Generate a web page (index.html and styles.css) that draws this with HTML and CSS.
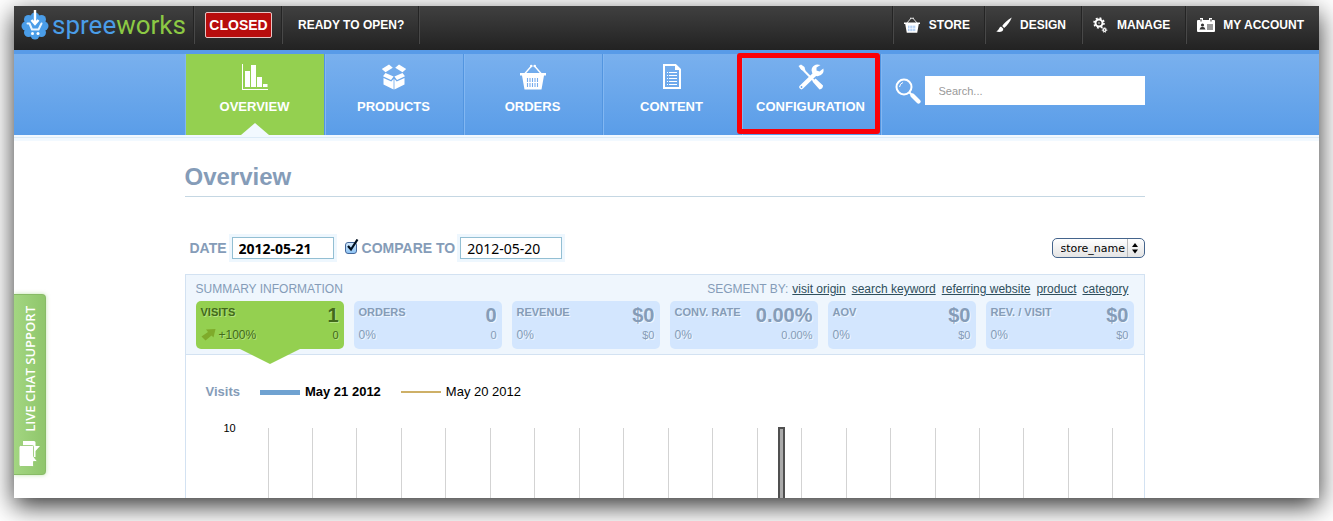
FILE: index.html
```html
<!DOCTYPE html>
<html lang="en">
<head>
<meta charset="utf-8">
<title>Spreeworks - Overview</title>
<link rel="stylesheet" href="styles.css">
</head>
<body>
<div class="frame">
  <header class="topbar">
    <a class="logo" href="#">
      <svg width="28" height="32" viewBox="0 0 28 32" aria-hidden="true">
        <g fill="#4a9de8"><circle cx="14" cy="17" r="11"/><circle cx="14" cy="8" r="4.500"/><circle cx="14" cy="26" r="4.500"/><circle cx="5" cy="17" r="4.500"/><circle cx="23" cy="17" r="4.500"/><circle cx="7.500" cy="10.500" r="4.500"/><circle cx="20.500" cy="10.500" r="4.500"/><circle cx="7.500" cy="23.500" r="4.500"/><circle cx="20.500" cy="23.500" r="4.500"/></g>
        <path d="M14 1V14M10.500 11L14 15L17.500 11" fill="none" stroke="#fff" stroke-width="2.400"/>
        <path d="M6.500 14.500H8.500L11 20.500H17.500L20.500 14.500" fill="none" stroke="#e8f5ff" stroke-width="2" stroke-linejoin="round" stroke-linecap="round"/>
        <circle cx="11.500" cy="24.500" r="1.500" fill="#fff"/><circle cx="17" cy="24.500" r="1.500" fill="#fff"/>
      </svg>
      <span class="wordmark">spree<span class="works">works</span></span>
    </a>
    <div class="status"><span class="closed">CLOSED</span></div>
    <a class="ready" href="#">READY TO OPEN?</a>
    <nav class="account" aria-label="Account">
      <a class="store" href="#">
        <svg width="16" height="16" viewBox="0 0 26 26" aria-hidden="true"><use href="#basket"/></svg>STORE</a>
      <a class="design" href="#">
        <svg width="16" height="16" viewBox="0 0 16 16" fill="#fff" aria-hidden="true"><path d="M15.800.500C12 2.500 8 6 6.200 9L8.200 11C11 8.500 14 5 15.800.500ZM5.300 9.800C3 9.600 3.500 12.500.300 14.600C3.500 15.600 7.500 15 7.300 11.800Z"/></svg>DESIGN</a>
      <a class="manage" href="#">
        <svg width="16" height="16" viewBox="0 0 16 16" fill="none" stroke="#fff" aria-hidden="true"><circle cx="6" cy="6" r="3.500" stroke-width="2"/><circle cx="6" cy="6" r="5" stroke-width="1.600" stroke-dasharray="1.900 2.027"/><circle cx="6" cy="6" r=".7" fill="#fff" stroke="none"/><circle cx="11.500" cy="13" r="1.400" stroke-width="1.300"/><circle cx="11.500" cy="13" r="2.300" stroke-dasharray=".9 .9"/></svg>MANAGE</a>
      <a class="myaccount" href="#">
        <svg width="18" height="14" viewBox="0 0 18 14" aria-hidden="true"><path d="M1 2H3V0H6V2H12V0H15V2H17Q18 2 18 3V13Q18 14 17 14H1Q0 14 0 13V3Q0 2 1 2Z" fill="#fff"/><path d="M4 1V3.500M14 1V3.500" stroke="#333"/><circle cx="5.500" cy="7" r="1.600" fill="#333"/><path d="M2.500 11.500Q3 8.800 5.500 8.800T8.500 11.500ZM10 6.500H16V7.500H10ZM10 8.500H16V9.500H10ZM10 10.500H16V11.500H10Z" fill="#333"/></svg>MY ACCOUNT</a>
    </nav>
  </header>

  <div class="mainnav">
    <div class="container navrow">
      <nav class="tabs" aria-label="Main">
        <a class="tab active" href="#">
          <svg width="26" height="26" viewBox="0 0 26 26" fill="#fff" aria-hidden="true"><path d="M0 0H1V25H26V26H0ZM3 7H8V23H3ZM9 1H14V23H9ZM15 13H20V23H15ZM21 20H25.500V23H21Z"/></svg>
          OVERVIEW</a>
        <a class="tab" href="#">
          <svg width="26" height="26" viewBox="0 0 26 26" fill="#fff" aria-hidden="true"><path d="M8 .500L11.800 3.800L4.500 8.200L.800 5ZM18 .500L25.200 5L21.500 8.200L14.200 3.800ZM4.500 9L12.600 12.600L10 16L2 12.200ZM21.500 9L24 12.200L16 16L13.400 12.600ZM2.500 14L10.300 17.600L12.600 15V25.500L2.500 20.500ZM23.500 14L15.700 17.600L13.400 15V25.500L23.500 20.500Z"/></svg>
          PRODUCTS</a>
        <a class="tab" href="#">
          <svg width="28" height="26" viewBox="0 0 26 26" aria-hidden="true">
            <g id="basket"><path d="M4.500 10L11.500 2M21.500 10L14.500 2" stroke="#fff" stroke-width="1.400"/><circle cx="11.300" cy="2" r="1.300" fill="#fff"/><circle cx="14.700" cy="2" r="1.300" fill="#fff"/><path d="M0 9H26V11.500H24L21.500 25.500H4.500L2 11.500H0Z" fill="#fff"/><path class="weave" d="M7.500 14V23M10 14V23M12.500 14V23M15 14V23M17.500 14V23" stroke-width="1.100"/><path d="M6.500 18.500H19.500" stroke="#fff"/></g></svg>
          ORDERS</a>
        <a class="tab" href="#">
          <svg width="26" height="26" viewBox="0 0 26 26" aria-hidden="true"><path d="M5 1H16.500L21 5.500V24H5Z" fill="none" stroke="#fff" stroke-width="2"/><path d="M16 0L22 6H16Z" fill="#fff"/><path d="M8 8.500H9M8 11.500H9M8 14.500H9M8 17.500H9M8 20.500H9M10 8.500H18M10 11.500H18M10 14.500H18M10 17.500H18M10 20.500H18" stroke="#fff" stroke-width="1"/></svg>
          CONTENT</a>
        <a class="tab" href="#">
          <svg width="26" height="26" viewBox="0 0 26 26" aria-hidden="true"><path d="M2.500 3L21 22" stroke="#fff" stroke-width="2"/><path d="M.500 2L3 .500L6.500 3L7.500 7L3.500 6ZM14.500 17.500L17.500 14.500L25 21.500Q25 25 21.500 25.500Z" fill="#fff"/><path d="M3.500 23L17 10" stroke="#fff" stroke-width="4.500" stroke-linecap="round"/><path d="M22.500 1Q16.500-1 14 4Q12.500 9 16.500 11.500Q21.500 14 25 9Q26 7 25.300 4.500L21.500 7.500L18.500 6.500L18.500 3.500Z" fill="#fff"/><circle cx="3.500" cy="23" r=".9" fill="#66a4eb"/></svg>
          CONFIGURATION<span class="highlight"></span></a>
      </nav>
      <form class="search">
        <svg width="26" height="26" viewBox="0 0 26 26" fill="none" stroke="#fff" aria-hidden="true"><circle cx="9" cy="9" r="7.500" stroke-width="2"/><path d="M4.500 9Q5 5.500 8 4.500" stroke-width="1"/><path d="M14.500 14.500L17 17" stroke-width="2"/><path d="M17.500 17.500L23.500 23.500" stroke-width="4.200" stroke-linecap="round"/></svg>
        <input type="search" placeholder="Search..." aria-label="Search">
      </form>
    </div>
  </div>

  <main class="container main">
    <h1>Overview</h1>
    <form class="filters">
      <label for="date">DATE</label>
      <input class="date strong" id="date" type="text" value="2012-05-21">
      <span class="tick"><input id="compare" type="checkbox" checked><svg width="14" height="14" viewBox="0 0 14 14" aria-hidden="true"><path d="M3 7L6 10.500L12.500.500" fill="none" stroke="#001020" stroke-width="2.200"/></svg></span>
      <label for="compare">COMPARE TO</label>
      <input class="date" type="text" value="2012-05-20" aria-label="Comparison date">
      <span class="picker"><select aria-label="Store"><option>store_name</option></select><svg width="16" height="18" viewBox="0 0 16 18" aria-hidden="true"><path d="M.500 0V18" stroke="#bbb"/><path d="M5 8L8 4L11 8ZM5 10.500L8 14.500L11 10.500Z"/></svg></span>
    </form>

    <section class="panel">
      <div class="summary">
        <div class="summaryhead">
          <span>SUMMARY INFORMATION</span>
          <div class="segments">SEGMENT BY: <a href="#">visit origin</a><a href="#">search keyword</a><a href="#">referring website</a><a href="#">product</a><a href="#">category</a></div>
        </div>
        <div class="cards">
          <div class="card current"><b>VISITS</b><strong>1</strong><span class="change"><svg width="15" height="12" viewBox="0 0 15 12" aria-hidden="true"><path d="M5 .500L14.500 0L12.500 8.500L10.500 6.500L4.500 11.500L.500 7.500L7 3Z" fill="#7fab2b"/></svg>+100%</span><small>0</small></div>
          <div class="card"><b>ORDERS</b><strong>0</strong><span>0%</span><small>0</small></div>
          <div class="card"><b>REVENUE</b><strong>$0</strong><span>0%</span><small>$0</small></div>
          <div class="card"><b>CONV. RATE</b><strong>0.00%</strong><span>0%</span><small>0.00%</small></div>
          <div class="card"><b>AOV</b><strong>$0</strong><span>0%</span><small>$0</small></div>
          <div class="card"><b>REV. / VISIT</b><strong>$0</strong><span>0%</span><small>$0</small></div>
        </div>
      </div>
      <div class="legend">
        <b class="metric">Visits</b>
        <span class="key keynow"><b>May 21 2012</b></span>
        <span class="key keythen">May 20 2012</span>
      </div>
      <div class="chart">
        <span class="axis">10</span>
        <div class="plot"><i></i><i></i><i></i><i></i><i></i><i></i><i></i><i></i><i></i><i></i><i></i><i></i><i></i><i></i><i></i><i></i><i></i><i></i><i></i><i></i><span class="bar"></span></div>
      </div>
    </section>
  </main>

  <button class="chat" type="button">
    <svg width="22" height="27" viewBox="0 0 22 27" aria-hidden="true"><path d="M4 1H15Q16.500 1 16.500 2.500V6H21L16.500 11V17H4Z" fill="#fff"/><path d="M1.500 5.500H13.500Q14.500 5.500 14.500 6.500V16.500L18.500 21.500H14.500V25.500Q14.500 26.500 13.500 26.500H1.500Q0 26.500 0 25V7Q0 5.500 1.500 5.500Z" fill="#fff" stroke="#8fc66b" stroke-width=".8"/></svg>
    <span>LIVE CHAT SUPPORT</span>
  </button>
</div>
</body>
</html>
```
FILE: styles.css
```css
* { box-sizing: border-box; }
body {
  margin: 0;
  min-height: 100vh;
  padding: 6px 14px 23px;
  display: flex;
  flex-direction: column;
  background: #fff;
  overflow: hidden;
  font-family: "Liberation Sans", Arial, sans-serif;
  font-size: 12px;
}
a { color: inherit; text-decoration: none; }
svg { display: block; flex: none; }
input, select, button { font: inherit; margin: 0; }

.frame {
  position: relative;
  flex: 1;
  display: flex;
  flex-direction: column;
  background: #fff;
  box-shadow: 0 8px 24px rgba(0, 0, 0, .8);
}
.container { width: 100%; max-width: 960px; margin: 0 auto; }

/* Dark bar */
.topbar {
  display: flex;
  height: 44px;
  background: linear-gradient(#404040, #222);
  color: #fff;
  font-weight: bold;
}
.topbar > *, .account a {
  display: flex;
  align-items: center;
  height: 38px;
  border-right: 1px solid #484848;
  box-shadow: inset -1px 0 #242424;
}
.topbar .logo { width: 181px; padding-left: 7px; gap: 3px; }
.wordmark {
  font-family: Roboto, sans-serif;
  font-size: 26px;
  font-weight: 400;
  line-height: 32px;
  color: #4a9de8;
}
.works { color: #8cc944; }
.status { width: 88px; justify-content: center; }
.closed {
  border: 1px solid #e8c4c4;
  border-radius: 2px;
  background: #b80d0d;
  padding: 0 3px;
  font-size: 14px;
  line-height: 24px;
}
.ready { padding: 0 15px; }
.topbar .account { margin-left: auto; border: 0; box-shadow: none; }
.account a { gap: 8px; padding: 0 15px 0 10px; border-right: 0; border-left: 1px solid #484848; box-shadow: -1px 0 #242424; }
.weave { stroke: #77aced; }
.account .store { gap: 9px; }
.account .design, .account .manage { padding-right: 16px; }

/* Blue navigation */
.mainnav {
  border-top: 4px solid #589be8;
  background: linear-gradient(#79b0ee, #5a9de8);
  box-shadow: 0 2px #f2f9ff, 0 3px #dcebf7, 0 6px #f2f9ff;
}
.navrow, .main { position: relative; padding-right: 4px; max-width: 964px; }
.navrow { display: flex; }
.tabs { display: flex; flex: none; border-left: 1px solid #82b7f2; }
.tab {
  position: relative;
  display: flex;
  flex-direction: column;
  align-items: center;
  gap: 9px;
  width: 139px;
  height: 81px;
  padding-top: 10px;
  border-right: 1px solid #5295e0;
  box-shadow: 1px 0 #82b7f2;
  color: #fff;
  font-size: 13px;
  font-weight: bold;
  line-height: 16px;
}
.active { background: #94d050; }
.active::after {
  content: "";
  position: absolute;
  bottom: 0;
  left: 55px;
  border: 14px solid transparent;
  border-top: 0;
  border-bottom: 12px solid #f2f9ff;
}
.highlight {
  position: absolute;
  inset: -1px 0 1px -5px;
  border: 5px solid #fb0007;
  border-radius: 3px;
}
.search { display: flex; flex: 1; gap: 4px; padding: 22px 0 0 14px; }
.search svg { margin-top: 2px; }
.search input {
  flex: 1;
  min-width: 0;
  height: 29px;
  padding: 0 14px;
  border: 0;
  background: #fff;
  font-size: 11px;
}
.search input::placeholder { color: #999; }

/* Content */
.main { display: flex; flex-direction: column; flex: 1; padding-top: 28px; }
h1 {
  margin: 0;
  padding-bottom: 5px;
  border-bottom: 1px solid #c5d7e3;
  color: #859cb8;
  font-size: 24px;
  line-height: 28px;
}
.filters {
  display: flex;
  align-items: center;
  gap: 5px;
  margin: 40px 0 15px;
  padding-left: 5px;
  color: #859cb8;
  font-size: 14px;
  font-weight: bold;
}
.date {
  width: 102px;
  height: 22px;
  padding: 0 6px;
  border: 1px solid #93bfd3;
  background: #fff;
  box-shadow: 0 0 0 3px #eef7fe;
  color: #000;
  font-family: "Noto Sans", sans-serif;
  font-size: 14px;
  font-weight: 400;
}
.strong { margin-right: 6px; font-weight: bold; }
.tick { position: relative; }
.tick input {
  display: block;
  appearance: none;
  width: 12px;
  height: 12px;
  border: 1px solid #44679a;
  border-radius: 3px;
  background: linear-gradient(#d5e9fb, #8ec4f4);
}
.tick svg { position: absolute; left: 0; bottom: 1px; pointer-events: none; }
.picker { position: relative; margin-left: auto; }
.picker select {
  display: block;
  appearance: none;
  width: 93px;
  height: 20px;
  padding: 0 8px;
  border: 1px solid #44648c;
  border-radius: 5px;
  background: linear-gradient(#fff, #e4e4e4);
  color: #000;
  font-family: "DejaVu Sans", sans-serif;
  font-size: 11px;
  font-weight: 400;
}
.picker svg { position: absolute; right: 2px; top: 1px; pointer-events: none; }

.panel {
  flex: 1;
  display: flex;
  flex-direction: column;
  border: 1px solid #d3e2f2;
  border-bottom: 0;
}
.summary {
  padding: 6px 10px 5px;
  border-bottom: 1px solid #d3e2f2;
  background: #eff6fd;
  color: #859cb8;
}
.summaryhead { display: flex; justify-content: space-between; padding-right: 5px; line-height: 16px; margin-bottom: 4px; }
.segments { display: flex; gap: 6px; }
.segments a { color: #2f4f5c; text-decoration: underline; }
.segments a:first-child { margin-left: -2px; }
.cards { display: grid; grid-template-columns: repeat(6, 1fr); gap: 10px; }
.card {
  position: relative;
  display: grid;
  grid-template-columns: auto auto;
  justify-content: space-between;
  align-content: start;
  height: 48px;
  padding: 2px 5px;
  border-radius: 5px;
  background: #d3e6fe;
  text-shadow: 1px 1px #eff6fd;
}
.card b { font-size: 11px; line-height: 18px; }
.card strong { font-size: 20px; line-height: 24px; text-align: right; }
.card span { font-size: 12px; line-height: 16px; }
.card small { font-size: 11px; line-height: 16px; text-align: right; }
.current { background: #94d050; color: #42691a; text-shadow: 1px 1px #b5e284; }
.card .change { display: flex; align-items: center; gap: 3px; }
.current::after {
  content: "";
  position: absolute;
  top: 100%;
  left: calc(50% - 30px);
  border: 30px solid transparent;
  border-bottom: 0;
  border-top: 15px solid #94d050;
}

.legend { display: flex; gap: 20px; padding: 29px 20px 28px; font-size: 13px; line-height: 16px; }
.metric { color: #859cb8; }
.key { display: flex; align-items: center; gap: 5px; }
.key::before { content: ""; width: 40px; }
.keynow::before { height: 5px; background: #70a2d1; }
.keythen::before { height: 2px; background: #ceb067; }
.chart { flex: 1; display: flex; min-height: 70px; padding: 0 30px 0 38px; }
.axis { width: 44px; margin-top: -7px; font-size: 11px; line-height: 14px; }
.plot { position: relative; flex: 1; display: flex; justify-content: space-between; }
.plot i { width: 1px; background: #d3d3d3; }
.bar {
  position: absolute;
  top: -1px;
  bottom: 0;
  left: 60.4%;
  width: 7px;
  border: 2px solid #505050;
  border-bottom: 0;
  background: #aaa;
}

/* Side tab */
.chat {
  position: absolute;
  left: 0;
  top: 288px;
  width: 32px;
  display: flex;
  flex-direction: column-reverse;
  align-items: center;
  gap: 8px;
  padding: 11px 0 7px;
  border: 1px solid #88bb66;
  border-left: 0;
  border-radius: 0 4px 4px 0;
  background: linear-gradient(90deg, #a3d681, #8fc66b);
  box-shadow: 0 0 4px rgba(130, 200, 90, .5);
  color: #fff;
  font-family: "Open Sans", sans-serif;
  font-size: 13px;
  font-weight: 600;
  line-height: 16px;
}
.chat span { writing-mode: vertical-rl; transform: rotate(180deg); }
```
